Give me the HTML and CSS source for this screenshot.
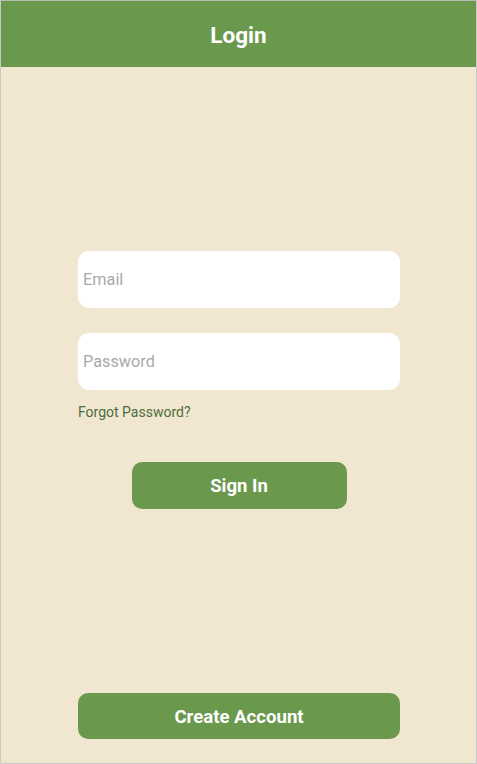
FILE: index.html
```html
<!DOCTYPE html>
<html lang="en">
<head>
<meta charset="utf-8">
<title>Login</title>
<link rel="stylesheet" href="styles.css">
</head>
<body>
<div class="app">
  <header class="topbar"><h1 class="title">Login</h1></header>
  <main class="content">
    <div class="form">
      <input class="field" type="email" placeholder="Email">
      <input class="field field-pass" type="password" placeholder="Password">
      <a class="forgot" href="#">Forgot Password?</a>
      <button class="btn btn-signin" type="button">Sign In</button>
    </div>
    <button class="btn btn-create" type="button">Create Account</button>
  </main>
</div>
</body>
</html>
```
FILE: styles.css
```css
* { box-sizing: border-box; }
html, body { margin: 0; padding: 0; }
body {
  font-family: Roboto, "Liberation Sans", Arial, sans-serif;
  background: #f1e6d0;
}
.app {
  width: 477px;
  height: 764px;
  border: 1px solid #c9c9c6;
  border-top-color: #b9bcb4;
  background: #f1e6d0;
  display: flex;
  flex-direction: column;
}
.topbar {
  height: 66px;
  background: #6a994e;
  display: flex;
  align-items: center;
  justify-content: center;
  flex-shrink: 0;
}
.title {
  margin: 0;
  color: #fff;
  font-size: 22.5px;
  font-weight: 700;
  padding-top: 2px;
}
.content {
  flex: 1;
  display: flex;
  flex-direction: column;
  padding: 184px 76px 24px 77px;
}
.form {
  display: flex;
  flex-direction: column;
  flex: 1;
}
.field {
  height: 57px;
  border: none;
  border-radius: 11px;
  background: #fff;
  padding: 0 5px;
  font-family: inherit;
  font-size: 16.3px;
  color: #333;
  outline: none;
}
.field::placeholder { color: #a9a9a9; }
.field-pass { margin-top: 25px; }
.forgot {
  margin-top: 14px;
  font-size: 14px;
  color: #4c6e3c;
  text-decoration: none;
  line-height: 16px;
}
.btn {
  border: none;
  background: #6a994e;
  color: #fff;
  font-family: inherit;
  font-weight: 700;
  border-radius: 10px;
  cursor: pointer;
}
.btn-signin {
  align-self: center;
  width: 215px;
  height: 47px;
  margin-top: 42px;
  padding-top: 2px;
  font-size: 18.5px;
}
.btn-create {
  height: 46px;
  padding-top: 3px;
  font-size: 18.6px;
}
```
